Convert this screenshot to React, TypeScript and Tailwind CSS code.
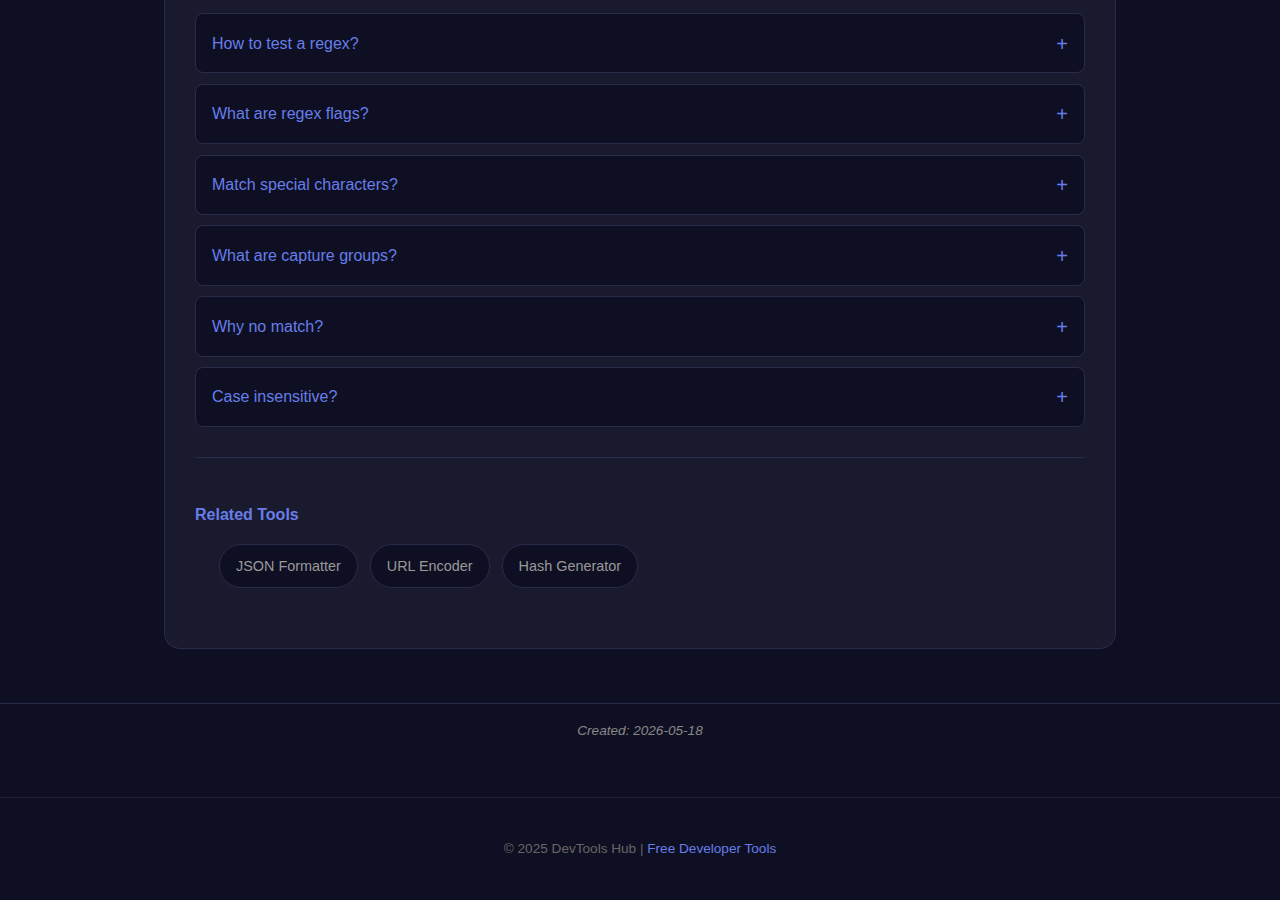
const FAQS = [
  "How to test a regex?",
  "What are regex flags?",
  "Match special characters?",
  "What are capture groups?",
  "Why no match?",
  "Case insensitive?",
];

const RELATED = ["JSON Formatter", "URL Encoder", "Hash Generator"];

export default function App() {
  return (
    <div
      className="min-h-[900px] bg-[#0f0f23] text-[#e0e0e0]"
      style={{ fontFamily: '"Liberation Sans", Arial, sans-serif' }}
    >
      <main className="pb-[54px]">
        <section className="mx-auto w-[952px] rounded-b-2xl border-x border-b border-[#2a2a4a] bg-[#1a1a2e] px-[30px] pt-[13px] pb-[30px]">
          <div className="flex flex-col gap-[10.4px]">
            {FAQS.map((q) => (
              <button
                key={q}
                type="button"
                className="flex items-center justify-between rounded-lg border border-[#2a2a4a] bg-[#0f0f23] px-4 pt-[20.5px] pb-[19.5px] text-left text-base leading-[18.4px] text-[#667eea]"
              >
                <span>{q}</span>
                <span className="text-xl leading-[18.4px] text-[#667eea]">+</span>
              </button>
            ))}
          </div>

          <hr className="mt-[30px] border-0 border-t border-[#2a2a4a]" />

          <h3 className="mt-[48px] text-base font-bold leading-[18.4px] text-[#667eea]">
            Related Tools
          </h3>
          <ul className="mt-[19.6px] mb-[30px] flex gap-3 pl-6">
            {RELATED.map((t) => (
              <li key={t}>
                <a
                  href="#"
                  className="flex h-[44px] items-center rounded-full border border-[#2a2a4a] bg-[#0f0f23] px-4 text-[14.4px] text-[#999]"
                >
                  {t}
                </a>
              </li>
            ))}
          </ul>
        </section>
      </main>

      <div className="border-t border-[#2a2a4a] pt-[19px] pb-[58px] text-center">
        <p className="text-[13.6px] italic leading-[16px] text-[#888]">Created: 2026-05-18</p>
      </div>

      <footer className="border-t border-[#1f1f38] pt-[43px] pb-[44px] text-center text-[13.6px] leading-[16px] text-[#666]">
        © 2025 DevTools Hub |{" "}
        <a href="#" className="text-[#667eea]">
          Free Developer Tools
        </a>
      </footer>
    </div>
  );
}
